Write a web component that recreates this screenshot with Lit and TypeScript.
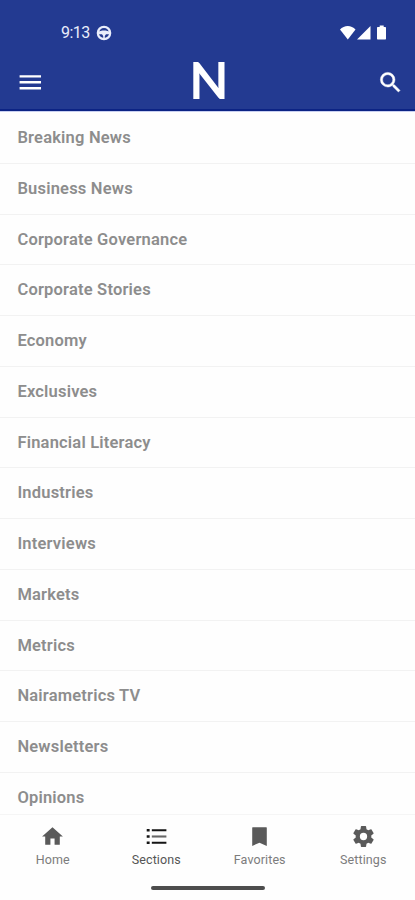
import { LitElement, html, css, svg } from "lit";
import { customElement } from "lit/decorators.js";
import { classMap } from "lit/directives/class-map.js";

const SECTIONS = [
  "Breaking News", "Business News", "Corporate Governance", "Corporate Stories",
  "Economy", "Exclusives", "Financial Literacy", "Industries", "Interviews",
  "Markets", "Metrics", "Nairametrics TV", "Newsletters", "Opinions",
];

const TABS = [
  { label: "Home", icon: svg`<path d="M10 20v-6h4v6h5v-8h3L12 3 2 12h3v8z"/>` },
  { label: "Sections", active: true, icon: svg`<path d="M2.6 4.7h2.8v2.6H2.6zM2.6 10.7h2.8v2.6H2.6zM2.6 16.7h2.8v2.6H2.6zM7.500 5h14v2h-14zM7.500 17h14v2h-14z"/><path d="M7.500 11h14v2h-14z" opacity=".65"/>` },
  { label: "Favorites", icon: svg`<path d="M18.500 3h-13c-.3 0-.5.2-.5.5V21l7-3 7 3V3.500c0-.3-.2-.5-.5-.5z"/>` },
  { label: "Settings", icon: svg`<path d="M19.430 12.980c.04-.32.07-.64.07-.98s-.03-.66-.07-.98l2.110-1.650c.19-.15.24-.42.12-.64l-2-3.460c-.12-.22-.39-.3-.61-.22l-2.490 1c-.52-.4-1.080-.73-1.690-.98l-.38-2.650C14.460 2.180 14.250 2 14 2h-4c-.25 0-.46.18-.49.42l-.38 2.650c-.61.25-1.170.59-1.690.98l-2.490-1c-.23-.09-.49 0-.61.22l-2 3.460c-.13.22-.07.49.12.64l2.110 1.650c-.04.32-.07.65-.07.98s.03.66.07.98l-2.110 1.650c-.19.15-.24.42-.12.64l2 3.460c.12.22.39.3.61.22l2.490-1c.52.4 1.080.73 1.690.98l.38 2.650c.03.24.24.42.49.42h4c.25 0 .46-.18.49-.42l.38-2.650c.61-.25 1.170-.59 1.690-.98l2.490 1c.23.09.49 0 .61-.22l2-3.460c.12-.22.07-.49-.12-.64zM12 15.500a3.500 3.500 0 1 1 0-7 3.500 3.500 0 0 1 0 7z"/>` },
];

@customElement("app-root")
export class AppRoot extends LitElement {
  static styles = css`
    :host {
      display: flex;
      flex-direction: column;
      height: 900px;
      overflow: hidden;
      background: #fefefe;
      font-family: Roboto, "Liberation Sans", sans-serif;
    }
    svg { display: block; fill: currentColor; }
    header {
      flex: none;
      box-sizing: border-box;
      height: 111px;
      background: #233a91;
      border-bottom: 2px solid #0c2384;
      box-shadow: 0 1px 0 #c8cff0;
      color: #fff;
    }
    .status {
      display: flex;
      align-items: center;
      box-sizing: border-box;
      height: 52px;
      padding: 13px 27px 0 61px;
      color: #e9edfb;
    }
    .time { width: 35px; font-size: 16px; line-height: 20px; letter-spacing: -0.5px; }
    .right { display: flex; margin-left: auto; color: #fff; }
    .bar {
      display: grid;
      grid-template-columns: 1fr auto 1fr;
      align-items: center;
      height: 60px;
      padding: 0 11px 0 16px;
    }
    .search { justify-self: end; }
    .logo {
      font: 700 51px/55px Lato, sans-serif;
      height: 60px;
      padding-right: 2px;
    }
    .list { flex: 1; min-height: 0; overflow: hidden; margin: 0; padding: 2px 0 0; list-style: none; }
    .row {
      box-sizing: border-box;
      height: 50.770px;
      padding-left: 17.400px;
      border-bottom: 1px solid #f2f2f2;
      color: #8d8d8d;
      font-size: 16.500px;
      font-weight: 600;
      line-height: 50px;
      letter-spacing: 0.2px;
    }
    nav {
      flex: none;
      display: grid;
      grid-template-columns: repeat(4, 1fr);
      box-sizing: border-box;
      height: 61px;
      padding: 9px 0 0 1px;
      border-top: 1px solid #f5f5f5;
    }
    .tab { display: flex; flex-direction: column; align-items: center; color: #5a5a5a; }
    .tab.active { color: #151515; }
    .label { margin-top: 3px; font-size: 12.500px; line-height: 16px; letter-spacing: 0.1px; color: #7c7c7c; }
    .active .label { color: #555; }
    .home-area { flex: none; height: 25px; display: flex; justify-content: center; align-items: center; }
    .handle { width: 114px; height: 4px; border-radius: 2px; background: #4d4d4d; }
  `;

  render() {
    return html`
      <header>
        <div class="status">
          <span class="time">9:13</span>
          <svg width="16" height="16" viewBox="0 0 16 16">
            <circle cx="8" cy="8" r="6.200" fill="none" stroke="currentColor" stroke-width="2.200"/>
            <path d="M2 7c3-2 9-2 12 0v2.300h-4L8.800 11v3H7.200v-3L6 9.300H2z"/>
          </svg>
          <div class="right">
            <svg width="48" height="16" viewBox="0 0 48 16">
              <path d="M0 4.500C4-.2 11.500-.2 15.500 4.500L7.800 14.500z"/>
              <path d="M30.500 1v13.500H17z"/>
              <path d="M37 3c0-.7.3-1 1-1h1.700V.5h4V2H45c.7 0 1 .3 1 1v10.500c0 .7-.3 1-1 1h-7c-.7 0-1-.3-1-1z"/>
            </svg>
          </div>
        </div>
        <div class="bar">
          <svg width="28.600" height="28.600" viewBox="0 0 24 24"><path d="M3 18h18v-2H3zm0-5h18v-2H3zm0-7v2h18V6z"/></svg>
          <div class="logo">N</div>
          <svg class="search" width="27" height="27" viewBox="0 0 24 24"><path d="M15.500 14h-.79l-.28-.27A6.471 6.471 0 0 0 16 9.500 6.500 6.500 0 1 0 9.500 16c1.610 0 3.090-.59 4.230-1.570l.27.28v.79l5 4.990L20.490 19zm-6 0C7.010 14 5 11.990 5 9.500S7.010 5 9.500 5 14 7.010 14 9.500 11.990 14 9.500 14z" stroke="currentColor" stroke-width=".4"/></svg>
        </div>
      </header>
      <ul class="list">${SECTIONS.map((s) => html`<li class="row">${s}</li>`)}</ul>
      <nav>
        ${TABS.map((t) => html`
          <div class=${classMap({ tab: true, active: !!t.active })}>
            <svg width="25" height="25" viewBox="0 0 24 24">${t.icon}</svg>
            <span class="label">${t.label}</span>
          </div>`)}
      </nav>
      <div class="home-area"><div class="handle"></div></div>
    `;
  }
}
